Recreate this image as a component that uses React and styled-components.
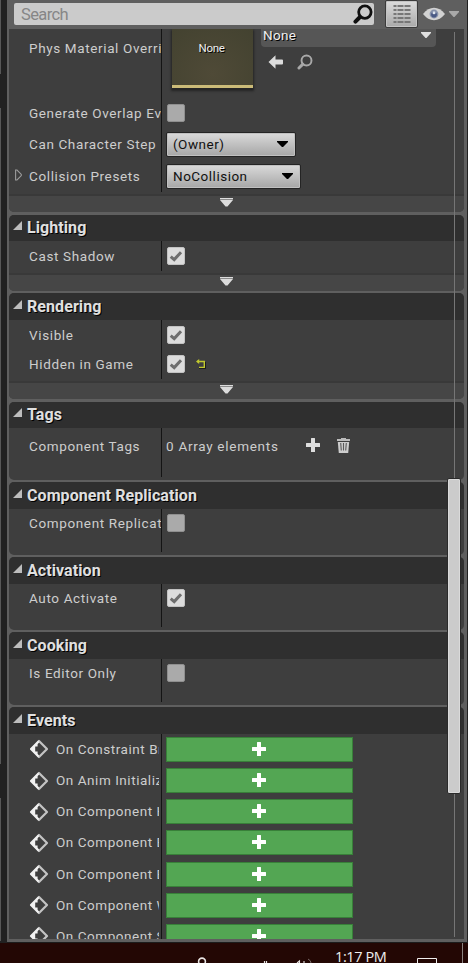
import React from 'react';
import styled, { createGlobalStyle, css } from 'styled-components';

const GlobalStyle = createGlobalStyle`
  * { box-sizing: border-box; }
  html, body { margin: 0; padding: 0; background: #212121; overflow: hidden; }
  body { font-family: Roboto, "Liberation Sans", sans-serif; }
  svg { display: block; flex: none; }
`;

const Screen = styled.div`
  width: 468px;
  height: 963px;
  display: flex;
  flex-direction: column;
  overflow: hidden;
  background: #212121;
`;

const Workspace = styled.div`
  display: flex;
  height: 943px;
  flex: none;
`;

const Gutter = styled.div`
  width: 7px;
  display: flex;
  flex-direction: column;
`;

const GutterEdge = styled.div`
  width: 1px;
  height: ${(p) => p.$height}px;
  margin-bottom: ${(p) => p.$gap || 0}px;
  background: #575757;
`;

const Panel = styled.div`
  width: 460px;
  height: 943px;
  padding: 0 3px 2px 2px;
  background: #5f5f5f;
  border-bottom: 1px solid #1c1c1c;
`;

const Toolbar = styled.div`
  height: 29px;
  display: flex;
  align-items: flex-start;
  padding-left: 5px;
`;

const SearchBox = styled.div`
  width: 360px;
  height: 22px;
  margin-top: 3px;
  padding: 0 1px 0 7px;
  display: flex;
  align-items: center;
  justify-content: space-between;
  background: #cbcbcb;
  border-radius: 2px;
  color: #868686;
  font-size: 16.5px;
  letter-spacing: -0.6px;
`;

const ListButton = styled.div`
  width: 33px;
  height: 28px;
  margin-left: 11px;
  display: flex;
  align-items: center;
  justify-content: center;
  border: 1px solid #3b3b3b;
  border-radius: 2px;
  background: linear-gradient(#dcdcdc, #a9a9a9);
  box-shadow: inset 0 0 0 1px #c4c4c4;
`;

const ViewOptions = styled.div`
  display: flex;
  align-items: center;
  gap: 4px;
  height: 28px;
  margin-left: 5px;
`;

const Viewport = styled.div`
  position: relative;
  height: 910px;
  overflow: hidden;
  background: #5f5f5f;
`;

const Section = styled.section`
  display: flex;
  flex-direction: column;
  height: ${(p) => p.$height}px;
  margin-bottom: ${(p) => p.$gap}px;
  border-radius: ${(p) => (p.$open ? '0 0 5px 5px' : '5px')};
  background: #3e3e3e;
  overflow: hidden;
`;

const SectionHeader = styled.header`
  height: ${(p) => p.$height}px;
  flex: none;
  display: flex;
  align-items: center;
  padding: 0 0 1px 4px;
  gap: 5px;
  background: #2f2f2f;
  color: #e0e0e0;
  font-size: 16px;
  font-weight: 700;
  letter-spacing: 0.08px;
  text-shadow: 1px 1px 0 #000;
  white-space: nowrap;
  svg { margin-top: -4px; }
`;

const SectionBody = styled.div`
  height: ${(p) => p.$height}px;
  flex: none;
  background: linear-gradient(#141414, #141414) 152px 0 / 1px 100% no-repeat;
`;

const SectionFooter = styled.footer`
  margin-top: auto;
  height: 18px;
  display: flex;
  justify-content: center;
  padding: 2px 20px 0 0;
  border-top: 2px solid #393939;
  background: #464646;
`;

const Row = styled.div`
  height: ${(p) => p.$height}px;
  display: grid;
  grid-template-columns: 20px 132px 1px 1fr;
  align-items: ${(p) => (p.$top ? 'start' : 'center')};
`;

const Expander = styled.div`
  padding: 0 0 3px 6px;
`;

const labelFont = css`
  font-size: 13.5px;
  letter-spacing: 0.63px;
  line-height: 18px;
  color: #cdcdcd;
  white-space: nowrap;
`;

const Label = styled.div`
  ${labelFont}
  grid-column: 2;
  overflow: hidden;
  padding-bottom: 1px;
  margin-top: ${(p) => (p.$top ? '10px' : 0)};
`;

const Value = styled.div`
  ${labelFont}
  grid-column: 4;
  display: flex;
  align-items: ${(p) => (p.$top ? 'flex-start' : 'center')};
  padding-left: ${(p) => p.$pad ?? 5}px;
`;

const CheckFrame = styled.div`
  width: 18px;
  height: 18px;
  display: flex;
  align-items: center;
  justify-content: center;
  border: 1px solid ${(p) => (p.$on ? '#c2c2c2' : '#8f8f8f')};
  border-radius: 2px;
  background: ${(p) => (p.$on ? '#dcdcdc' : '#aaaaaa')};
`;

const ResetSlot = styled.div`
  margin: -1px 0 0 11px;
`;

const Select = styled.div`
  width: ${(p) => p.$width}px;
  height: 25px;
  padding: 0 7px 1px 6px;
  display: flex;
  align-items: center;
  justify-content: space-between;
  border: 1px solid #242424;
  border-radius: 2px;
  background: linear-gradient(#dadada, #a6a6a6);
  box-shadow: inset 0 0 0 1px #c0c0c0;
  color: #111;
  letter-spacing: 0.5px;
`;

const Thumbnail = styled.div`
  width: 81px;
  height: 59px;
  padding: 11px 2px 0 0;
  border-bottom: 3px solid #cbbb78;
  background: radial-gradient(circle at 50% 80%, #4f4a37, #434230);
  box-shadow: 0 2px 2px 1px #252525;
  color: #eee;
  font-size: 11.5px;
  letter-spacing: -0.3px;
  line-height: 17px;
  text-align: center;
  text-shadow: 1px 1px 0 #000;
`;

const AssetControls = styled.div`
  margin-left: 8px;
  display: flex;
  flex-direction: column;
  gap: 7px;
`;

const AssetPicker = styled.div`
  width: 175px;
  height: 18px;
  padding: 0 5px 7px 2px;
  display: flex;
  align-items: center;
  justify-content: space-between;
  background: #565656;
  border-radius: 0 0 4px 4px;
  color: #f0f0f0;
  letter-spacing: 0.3px;
  text-shadow: 1px 1px 0 #000;
`;

const AssetActions = styled.div`
  display: flex;
  align-items: center;
  gap: 13px;
  padding-left: 7px;
`;

const ArrayText = styled.span`
  padding-bottom: 1px;
  letter-spacing: 0.72px;
  width: 140px;
`;

const ArrayActions = styled.div`
  display: flex;
  align-items: center;
  gap: 17px;
  margin-top: -2px;
`;

const EventRow = styled.div`
  height: 31.17px;
  padding-top: 2.9px;
  display: grid;
  grid-template-columns: 20px 27px 103px 7px 187px;
  align-items: start;
  svg { margin-top: 2.5px; }
`;

const EventLabel = styled.div`
  ${labelFont}
  letter-spacing: 0.54px;
  margin-top: 3px;
  overflow: hidden;
`;

const AddEvent = styled.div`
  grid-column: 5;
  height: 25px;
  display: flex;
  justify-content: center;
  padding-right: 1px;
  border: 1px solid #388039;
  background: #53a653;
  svg { margin-top: 4px; }
`;

const ScrollTrack = styled.div`
  position: absolute;
  top: 3px;
  right: 3px;
  width: 14px;
  height: 905px;
  background: linear-gradient(#767676, #767676) 7px 0 / 1px 100% no-repeat;
`;

const ScrollThumb = styled.div`
  width: 14px;
  height: 316px;
  margin-top: 446px;
  border: 1px solid #2a2a2a;
  border-radius: 2px;
  background: #cbcbcb;
  box-shadow: inset 0 0 0 1px #dadada;
`;

const Taskbar = styled.div`
  height: 20px;
  flex: none;
  display: flex;
  align-items: flex-start;
  padding-left: 197px;
  background: #230704;
  overflow: hidden;
`;

const Clock = styled.div`
  width: 82px;
  margin: 4px 0 0 -1px;
  color: #eee;
  font-family: "Open Sans", "Noto Sans", sans-serif;
  font-size: 14.5px;
  letter-spacing: -0.4px;
  line-height: 20px;
  white-space: nowrap;
`;

const TaskbarDivider = styled.div`
  width: 1px;
  height: 20px;
  margin-left: 25px;
  background: #8b8280;
`;

const Magnifier = ({ size, color, weight }) => (
  <svg width={size} height={size} viewBox="0 0 18 18" fill="none" stroke={color}>
    <circle cx="10.7" cy="7.3" r="5.6" strokeWidth={weight} />
    <path d="M6.3 11.7 L2.2 15.8" strokeWidth={weight + 1.1} strokeLinecap="round" />
  </svg>
);

const Plus = ({ color = '#fff', size = 14 }) => (
  <svg width={size} height={size} viewBox="0 0 14 14">
    <path d="M5 0.5 Q5 0 5.5 0 H8.5 Q9 0 9 0.5 V5 H13.5 Q14 5 14 5.5 V8.5 Q14 9 13.5 9 H9 V13.5 Q9 14 8.5 14 H5.5 Q5 14 5 13.5 V9 H0.5 Q0 9 0 8.5 V5.5 Q0 5 0.5 5 H5 Z" fill={color} />
  </svg>
);

const Caret = ({ color, width = 10, height = 6 }) => (
  <svg width={width} height={height} viewBox="0 0 10 6" preserveAspectRatio="none">
    <path d="M0 0 H10 V1 L5.5 6 H4.5 L0 1 Z" fill={color} />
  </svg>
);

const ListIcon = () => (
  <svg width="18" height="18" viewBox="0 0 18 18" fill="#777">
    {[0, 4, 8, 12, 16].map((y) => (
      <React.Fragment key={y}>
        <rect x="0.5" y={y} width="3" height="2" />
        <rect x="4.5" y={y} width="6" height="2" />
        <rect x="11.5" y={y} width="6" height="2" />
      </React.Fragment>
    ))}
  </svg>
);

const EyeIcon = () => (
  <svg width="22" height="14" viewBox="0 0 22 14">
    <path d="M0 7 Q5 0.8 11 0.8 Q17 0.8 22 7 Q17 13.2 11 13.2 Q5 13.2 0 7 Z" fill="#d2d2d2" />
    <circle cx="11" cy="7" r="4.4" fill="#8792ab" />
    <circle cx="11" cy="7.6" r="2.9" fill="#4a5a85" />
    <circle cx="11" cy="5.8" r="1.5" fill="#dfe5ee" />
  </svg>
);

const CollapseIcon = () => (
  <svg width="9" height="9" viewBox="0 0 9 9">
    <path d="M9 0 V9 H0 Z" fill="#bdbdbd" />
  </svg>
);

const MoreIcon = () => (
  <svg width="13" height="9" viewBox="0 0 13 9">
    <path d="M0 0 H13 V1 H0 Z M0 2 H13 L7.5 8.5 H5.5 Z" fill="#dcdcdc" />
    <path d="M0 1 H13 V2 H0 Z" fill="#8a8a8a" />
  </svg>
);

const ExpandIcon = () => (
  <svg width="7" height="12" viewBox="0 0 7 12">
    <path d="M0.6 1 V11 H2 L6.3 6.6 V5.4 L2 1 Z" fill="none" stroke="#9c9c9c" strokeWidth="1.1" />
  </svg>
);

const TickIcon = () => (
  <svg width="14" height="12" viewBox="0 0 14 12">
    <path d="M1.7 6.6 L5.2 9.6 L12 2.2" fill="none" stroke="#6e6e6e" strokeWidth="3" />
  </svg>
);

const ResetIcon = () => (
  <svg width="10" height="10" viewBox="0 0 10 10">
    <path d="M3 9.7 H9.6 V3" fill="none" stroke="#181818" strokeWidth="1" />
    <path d="M1 2.5 H8.3 V8.4 H3" fill="none" stroke="#c1c92f" strokeWidth="1.4" />
    <path d="M0 2.5 L3.2 0 V5 Z" fill="#c1c92f" />
  </svg>
);

const BackArrow = () => (
  <svg width="16" height="14" viewBox="0 0 16 14">
    <path d="M0.5 7 L7.5 0.3 V4.4 H14 Q15 4.4 15 5.4 V8.6 Q15 9.6 14 9.6 H7.5 V13.7 Z" fill="#dcdcdc" />
  </svg>
);

const TrashIcon = () => (
  <svg width="13" height="15" viewBox="0 0 13 15">
    <path d="M0 1 H4 V0 H9 V1 H13 V3 H0 Z" fill="#bcbcbc" />
    <path d="M0.8 4 H12.2 L11.2 15 H1.8 Z" fill="#cdcdcd" />
    <path d="M3.7 5 L4.3 12.5 M6.5 5 V12.5 M9.3 5 L8.7 12.5" stroke="#5a5a5a" strokeWidth="1.1" />
  </svg>
);

const EventIcon = () => (
  <svg width="20" height="20" viewBox="0 0 20 20">
    <path d="M10 2 L18 10 L10 18 L2 10 Z" fill="none" stroke="#c4c4c4" strokeWidth="2.2" strokeLinejoin="round" />
    <path d="M9.4 1.3 L0.9 10 L9.4 18.7 L10 16.4 L8.6 15 V12.4 H6.2 V7.6 H8.6 V5 L10 3.6 Z" fill="#f1f1f1" />
  </svg>
);

const TrayIcons = () => (
  <svg width="139" height="20" viewBox="0 1 139 20" fill="none" stroke="#e8e4e3">
    <circle cx="5" cy="19.5" r="3.4" strokeWidth="1.6" />
    <path d="M67.5 19 V21 M69.5 19 V21" strokeWidth="1.2" />
    <path d="M100 21 L102.5 19 V21 M107 19 V21" strokeWidth="1.1" />
    <path d="M111 17 Q114 18.5 114 21" stroke="#776765" strokeWidth="1" />
  </svg>
);

const NoticeIcon = () => (
  <svg width="20" height="20" viewBox="0 0 20 20">
    <path d="M0.5 20 V15.5 H19.5 V20" fill="none" stroke="#f0eeee" strokeWidth="1" />
  </svg>
);

const Check = ({ on }) => <CheckFrame $on={on}>{on && <TickIcon />}</CheckFrame>;

const Property = ({ label, height = 28, expandable, children, pad }) => (
  <Row $height={height}>
    {expandable && <Expander><ExpandIcon /></Expander>}
    <Label>{label}</Label>
    <Value $pad={pad}>{children}</Value>
  </Row>
);

const Category = ({ title, header = 27, body, height, gap = 2, more, children }) => (
  <Section $height={height} $gap={gap} $open={!title}>
    {title && <SectionHeader $height={header}><CollapseIcon />{title}</SectionHeader>}
    <SectionBody $height={body}>{children}</SectionBody>
    {more && <SectionFooter><MoreIcon /></SectionFooter>}
  </Section>
);

const EVENTS = [
  'On Constraint Broken',
  'On Anim Initialized',
  'On Component Hit',
  'On Component Begin Overlap',
  'On Component End Overlap',
  'On Component Wake',
  'On Component Sleep',
];

export default function App() {
  return (
    <Screen>
      <GlobalStyle />
      <Workspace>
        <Gutter>
          <GutterEdge $height={74} $gap={34} />
          <GutterEdge $height={656} $gap={34} />
          <GutterEdge $height={143} />
        </Gutter>
        <Panel>
          <Toolbar>
            <SearchBox>Search<Magnifier size={20} color="#101010" weight={2.5} /></SearchBox>
            <ListButton><ListIcon /></ListButton>
            <ViewOptions><EyeIcon /><Caret color="#a9a9a9" /></ViewOptions>
          </Toolbar>
          <Viewport>
            <Category body={163} height={183} gap={3} more>
              <Row $height={69} $top>
                <Label $top>Phys Material Override</Label>
                <Value $top $pad={10}>
                  <Thumbnail>None</Thumbnail>
                  <AssetControls>
                    <AssetPicker>None<Caret color="#e0e0e0" /></AssetPicker>
                    <AssetActions><BackArrow /><Magnifier size={16} color="#a8a8a8" weight={2.2} /></AssetActions>
                  </AssetControls>
                </Value>
              </Row>
              <Property label="Generate Overlap Events" height={30}><Check /></Property>
              <Property label="Can Character Step" height={32} pad={4}>
                <Select $width={130}>(Owner)<Caret color="#000" width={11} /></Select>
              </Property>
              <Property label="Collision Presets" height={32} expandable pad={4}>
                <Select $width={135}>NoCollision<Caret color="#000" width={11} /></Select>
              </Property>
            </Category>
            <Category title="Lighting" header={26} body={30} height={76} more>
              <Property label="Cast Shadow" height={30}><Check on /></Property>
            </Category>
            <Category title="Rendering" body={59} height={106} gap={3} more>
              <Property label="Visible" height={30}><Check on /></Property>
              <Property label="Hidden in Game"><Check on /><ResetSlot><ResetIcon /></ResetSlot></Property>
            </Category>
            <Category title="Tags" header={26} body={49} height={78}>
              <Property label="Component Tags" height={36} pad={4}>
                <ArrayText>0 Array elements</ArrayText>
                <ArrayActions><Plus color="#dedede" /><TrashIcon /></ArrayActions>
              </Property>
            </Category>
            <Category title="Component Replication" body={43} height={73}>
              <Property label="Component Replicates"><Check /></Property>
            </Category>
            <Category title="Activation" body={43} height={73}>
              <Property label="Auto Activate"><Check on /></Property>
            </Category>
            <Category title="Cooking" body={43} height={73}>
              <Property label="Is Editor Only"><Check /></Property>
            </Category>
            <Category title="Events" body={220} height={250}>
              {EVENTS.map((name) => (
                <EventRow key={name}>
                  <span />
                  <EventIcon />
                  <EventLabel>{name}</EventLabel>
                  <AddEvent><Plus /></AddEvent>
                </EventRow>
              ))}
            </Category>
            <ScrollTrack><ScrollThumb /></ScrollTrack>
          </Viewport>
        </Panel>
      </Workspace>
      <Taskbar>
        <TrayIcons />
        <Clock>1:17 PM</Clock>
        <NoticeIcon />
        <TaskbarDivider />
      </Taskbar>
    </Screen>
  );
}
